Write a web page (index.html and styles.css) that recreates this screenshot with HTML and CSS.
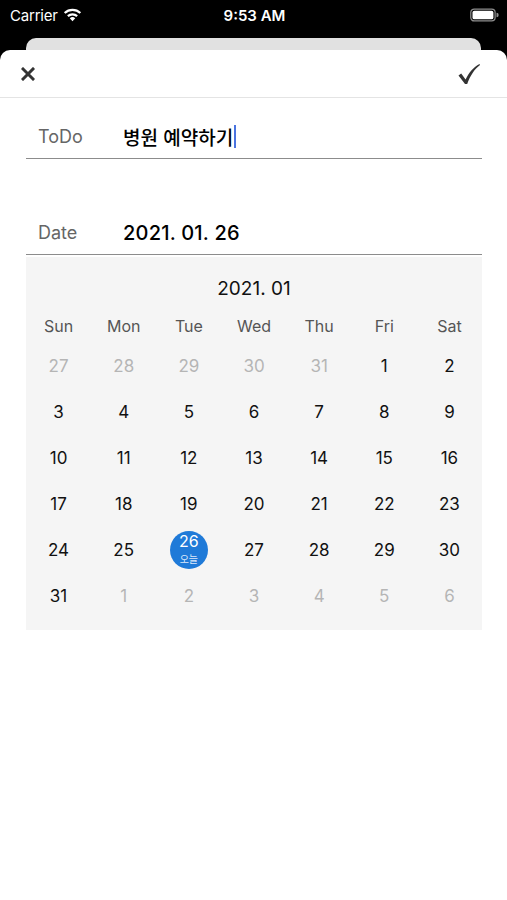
FILE: index.html
```html
<!DOCTYPE html>
<html lang="ko">
<head>
    <meta charset="UTF-8">
    <meta name="viewport" content="width=device-width, initial-scale=1.0">
    <title>ToDo</title>
    <link rel="stylesheet" href="styles.css">
</head>
<body>
    <div class="status">
        <div class="status-left">
            <span>Carrier</span>
            <svg class="wifi" width="19" height="14" viewBox="0 0 18 13">
                <path d="M9 12.5 L6.4 9.6 A3.8 3.8 0 0 1 11.6 9.6 Z" fill="#fff"/>
                <path d="M4.6 7.6 A6.4 6.4 0 0 1 13.4 7.6" stroke="#fff" stroke-width="2.1" fill="none"/>
                <path d="M1.6 4.6 A10.6 10.6 0 0 1 16.4 4.6" stroke="#fff" stroke-width="2.1" fill="none"/>
            </svg>
        </div>
        <div class="status-time">9:53 AM</div>
        <div class="status-right">
            <svg width="29" height="14" viewBox="0 0 28 13">
                <rect x="0.75" y="0.75" width="23.5" height="11.5" rx="3.3" fill="none" stroke="#8e8e8e" stroke-width="1.2"/>
                <rect x="2.4" y="2.4" width="20.2" height="8.2" rx="1.8" fill="#fff"/>
                <path d="M25.6 4.4 A2 2 0 0 1 25.6 8.6 Z" fill="#8e8e8e"/>
            </svg>
        </div>
    </div>
    <div class="back-card"></div>

    <div class="sheet">
        <div class="toolbar">
            <svg width="14" height="14" viewBox="0 0 14 14">
                <path d="M2 2 L12 12 M12 2 L2 12" stroke="#333" stroke-width="3" stroke-linecap="square"/>
            </svg>
            <svg width="24" height="22" viewBox="0 0 24 22">
                <path d="M1.5 12.5 L4.2 10.6 L8.6 16.6 C12 9.5 16.5 4 22.5 1 L23 1.9 C17.5 6 13.2 12.5 10.2 21 L8 21 Z" fill="#333"/>
            </svg>
        </div>

        <div class="form">
            <div class="row">
                <span class="label">ToDo</span>
                <span class="value todo">병원 예약하기<span class="cursor"></span></span>
            </div>
            <div class="row date-row">
                <span class="label">Date</span>
                <span class="value date">2021. 01. 26</span>
            </div>

            <div class="calendar">
                <div class="cal-title">2021. 01</div>
                <div class="weekdays">
                    <span>Sun</span><span>Mon</span><span>Tue</span><span>Wed</span><span>Thu</span><span>Fri</span><span>Sat</span>
                </div>
                <div class="days">
                    <span class="other">27</span><span class="other">28</span><span class="other">29</span><span class="other">30</span><span class="other">31</span><span>1</span><span>2</span>
                    <span>3</span><span>4</span><span>5</span><span>6</span><span>7</span><span>8</span><span>9</span>
                    <span>10</span><span>11</span><span>12</span><span>13</span><span>14</span><span>15</span><span>16</span>
                    <span>17</span><span>18</span><span>19</span><span>20</span><span>21</span><span>22</span><span>23</span>
                    <span>24</span><span>25</span><span class="today"><b>26</b><small>오늘</small></span><span>27</span><span>28</span><span>29</span><span>30</span>
                    <span>31</span><span class="other">1</span><span class="other">2</span><span class="other">3</span><span class="other">4</span><span class="other">5</span><span class="other">6</span>
                </div>
            </div>
        </div>
    </div>
</body>
</html>
```

FILE: styles.css
```css
body {
    margin: 0;
    background-color: #000;
    font-family: Inter, "Liberation Sans", "Noto Sans CJK KR", sans-serif;
    height: 900px;
    overflow: hidden;
}
.status {
    height: 30px;
    display: flex;
    align-items: center;
    justify-content: space-between;
    padding: 0 8px 0 10px;
    color: #fff;
    font-size: 15px;
}
.status-left {
    display: flex;
    align-items: center;
    gap: 5px;
    width: 100px;
}
.status-left span {
    letter-spacing: -0.2px;
}
.status-time {
    font-weight: 600;
}
.status-right {
    width: 100px;
    display: flex;
    justify-content: flex-end;
}
.back-card {
    height: 12px;
    margin: 8px 26px 0;
    background-color: #e1e1e1;
    border-radius: 10px 10px 0 0;
}
.sheet {
    background-color: #fff;
    border-radius: 10px 10px 0 0;
    height: 850px;
}
.toolbar {
    height: 48px;
    display: flex;
    align-items: center;
    justify-content: space-between;
    padding: 0 26px 0 21px;
    border-bottom: 1px solid #e4e4e4;
    box-sizing: border-box;
}
.form {
    padding: 0 25px 0 26px;
}
.row {
    display: flex;
    align-items: center;
    height: 61px;
    padding-top: 17px;
    box-sizing: border-box;
    border-bottom: 1.5px solid #8c8c8c;
}
.date-row {
    margin-top: 35px;
}
.label {
    width: 85px;
    padding-left: 12px;
    color: #666;
    font-size: 18px;
}
.value {
    color: #000;
}
.todo {
    font-family: "Noto Sans CJK KR", sans-serif;
    font-size: 19px;
    font-weight: 500;
    display: flex;
    align-items: center;
}
.cursor {
    display: inline-block;
    width: 2px;
    height: 23px;
    margin-left: 1px;
    background-color: #4a74e0;
}
.date {
    font-size: 20px;
    font-weight: 500;
    letter-spacing: 0.2px;
}
.calendar {
    margin-top: 2px;
    background-color: #f5f5f5;
    padding: 17px 0 11px;
}
.cal-title {
    text-align: center;
    font-size: 19px;
    line-height: 30px;
    color: #111;
}
.weekdays {
    margin-top: 7px;
    display: grid;
    grid-template-columns: repeat(7, 1fr);
    line-height: 30px;
    color: #555;
    font-size: 16px;
    text-align: center;
}
.days {
    margin-top: 2px;
    display: grid;
    grid-template-columns: repeat(7, 1fr);
    grid-auto-rows: 46px;
    font-size: 17px;
    color: #111;
}
.days span {
    display: flex;
    align-items: center;
    justify-content: center;
}
.days .other {
    color: #b5b5b5;
}
.days .today {
    flex-direction: column;
    width: 38px;
    height: 38px;
    margin: 4px auto 0;
    border-radius: 50%;
    background-color: #1f7ad8;
    color: #fff;
}
.today b {
    display: block;
    font-weight: 400;
    font-size: 16px;
    line-height: 19.5px;
    margin-top: -2px;
}
.today small {
    display: block;
    font-family: "Noto Sans CJK KR", sans-serif;
    font-size: 10px;
    line-height: 14.5px;
    color: #dce9fb;
}
```
